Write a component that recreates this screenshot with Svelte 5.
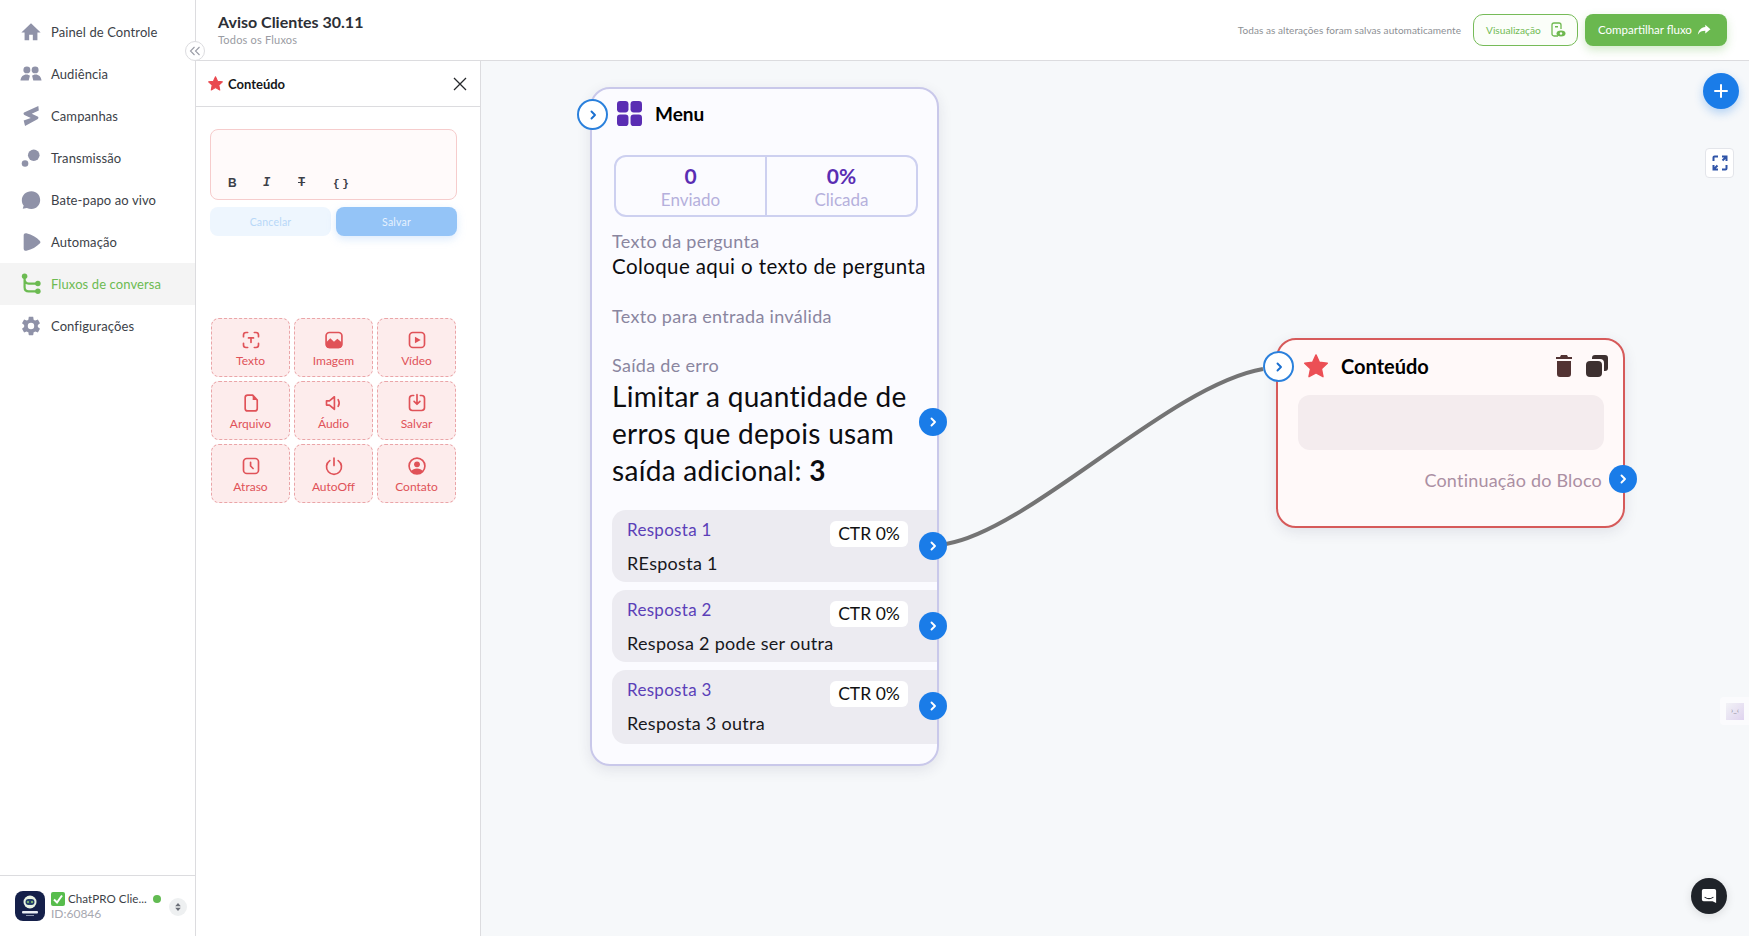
<script>
  const nav = [
    { label: 'Painel de Controle', icon: '<path d="M12 2.500 1.500 12.500H5V21h5v-6h4v6h5v-8.500h3.500z"/>' },
    { label: 'Audiência', icon: '<circle cx="7.500" cy="7.500" r="3.800"/><circle cx="16.500" cy="7.500" r="3.800"/><path d="M.5 19c.4-4 3-6.500 6.500-6.500 1.600 0 3 .6 3.800 1.500L9.500 19zM23.500 19c-.4-4-3-6.500-6.500-6.500-1.600 0-3 .6-3.800 1.500l1.300 5z"/>' },
    { label: 'Campanhas', icon: '<path d="M20 1 5 8c-1.500.7-1.500 2.200-.2 3l7 3.200L4 17l1.500 6L19 15.500c1.500-.8 1.400-2.200.2-2.900l-6.400-3L20.500 6z"/>' },
    { label: 'Transmissão', icon: '<circle cx="15" cy="9" r="6.300"/><circle cx="5.500" cy="18" r="3.600"/>' },
    { label: 'Bate-papo ao vivo', icon: '<path d="M12.500 2.500C6.500 2.500 2 6.800 2 12.200c0 2.300.7 4.300 2 5.900L3 21.500l4.500-.8c1.500.7 3.200 1 5 1C18 21.700 22 17.500 22 12c0-5.400-4-9.500-9.500-9.500z"/>' },
    { label: 'Automação', icon: '<path d="M4 5c0-2 1.300-2.800 3-2.500C13 3.700 18 7 21.500 10.500c1 1 1 2.200 0 3.100C18 17.200 13 20.300 7 21.500c-1.700.3-3-.5-3-2.500z"/>' },
    { label: 'Fluxos de conversa', active: true, icon: '<circle cx="5" cy="3.500" r="3"/><circle cx="19.500" cy="11.500" r="3"/><circle cx="19.500" cy="20" r="3"/><path d="M5 4v11.500c0 3 1.500 4.500 4.500 4.500h9M5 6.500c0 3.500 1.500 5 4.500 5h9" fill="none" stroke="currentColor" stroke-width="2.400"/>' },
    { label: 'Configurações', icon: '<path d="M12,15.500A3.500,3.500 0 0,1 8.500,12A3.500,3.500 0 0,1 12,8.500A3.500,3.500 0 0,1 15.500,12A3.500,3.500 0 0,1 12,15.500M19.430,12.970C19.470,12.650 19.500,12.330 19.500,12C19.500,11.670 19.470,11.340 19.430,11L21.540,9.370C21.730,9.220 21.780,8.950 21.660,8.730L19.660,5.270C19.540,5.050 19.270,4.960 19.050,5.050L16.560,6.050C16.040,5.660 15.500,5.320 14.870,5.070L14.500,2.420C14.460,2.180 14.250,2 14,2H10C9.750,2 9.540,2.180 9.500,2.420L9.130,5.070C8.500,5.320 7.960,5.660 7.440,6.050L4.950,5.050C4.730,4.960 4.460,5.050 4.340,5.270L2.340,8.730C2.210,8.950 2.270,9.220 2.460,9.370L4.570,11C4.530,11.340 4.500,11.670 4.500,12C4.500,12.330 4.530,12.650 4.570,12.970L2.460,14.630C2.270,14.780 2.210,15.050 2.340,15.270L4.340,18.730C4.460,18.950 4.730,19.030 4.950,18.950L7.440,17.940C7.960,18.340 8.500,18.680 9.130,18.930L9.500,21.580C9.540,21.820 9.750,22 10,22H14C14.250,22 14.460,21.820 14.500,21.580L14.870,18.930C15.500,18.670 16.040,18.340 16.560,17.940L19.050,18.950C19.270,19.030 19.540,18.950 19.660,18.730L21.660,15.270C21.780,15.050 21.730,14.780 21.540,14.630L19.430,12.970Z"/>' }
  ]

  const line = 'fill="none" stroke="currentColor" stroke-width="2" stroke-linecap="round" stroke-linejoin="round"'
  const tiles = [
    { label: 'Texto', icon: `<path ${line} d="M3 8V6a3 3 0 0 1 3-3h2M16 3h2a3 3 0 0 1 3 3v2M21 16v2a3 3 0 0 1-3 3h-2M8 21H6a3 3 0 0 1-3-3v-2"/><path ${line} d="M9 9.500h6M12 9.500V15"/>` },
    { label: 'Imagem', icon: `<rect x="2.500" y="3" width="19" height="18" rx="4" ${line}/><path d="M2.500 15l5-5 4.500 4 4-3.500 5.500 4.500v3a4 4 0 0 1-4 4h-11a4 4 0 0 1-4-4z"/>` },
    { label: 'Vídeo', icon: `<rect x="3" y="3" width="18" height="18" rx="4" ${line}/><path d="M9.500 8l7 4-7 4z"/>` },
    { label: 'Arquivo', icon: `<path ${line} d="M5 5.500a3 3 0 0 1 3-3h6l5.500 6V18.500a3 3 0 0 1-3 3H8a3 3 0 0 1-3-3z"/><path d="M14 2.500l5.500 6H14z"/>` },
    { label: 'Áudio', icon: `<path ${line} d="M3 9.500v5h3.500l6 5V4.500l-6 5zM17 8c1.500 2.500 1.500 5.500 0 8"/>` },
    { label: 'Salvar', icon: `<path ${line} d="M8 3H6.500A3.500 3.500 0 0 0 3 6.500v11A3.500 3.500 0 0 0 6.500 21h11a3.500 3.500 0 0 0 3.500-3.500v-11A3.500 3.500 0 0 0 17.500 3H16M12 2v11M8.500 10l3.500 3.500 3.500-3.500"/>` },
    { label: 'Atraso', icon: `<rect x="3" y="3" width="18" height="18" rx="4" ${line}/><path ${line} d="M11.500 7.500V12l3 3"/>` },
    { label: 'AutoOff', icon: `<path ${line} d="M12 2.500v9M7 5.500a9 9 0 1 0 10 0"/>` },
    { label: 'Contato', icon: `<circle cx="12" cy="12" r="9.500" ${line}/><circle cx="12" cy="10" r="3.500"/><path d="M5 18.500c1.500-2.500 4-3.500 7-3.500s5.500 1 7 3.500c-2 2-4.500 3-7 3s-5-1-7-3z"/>` }
  ]

  const replies = [
    { title: 'Resposta 1', text: 'REsposta 1' },
    { title: 'Resposta 2', text: 'Resposa 2 pode ser outra' },
    { title: 'Resposta 3', text: 'Resposta 3 outra' }
  ]

  const star = 'M12 2.500l2.900 6.300 6.800.9-5 4.700 1.300 6.800-6-3.400-6 3.400 1.300-6.800-5-4.700 6.800-.9z'
</script>

{#snippet chevron()}
  <svg viewBox="0 0 12 12" width="12" height="12"><path d="M4.500 2.500 8 6l-3.500 3.500" fill="none" stroke="currentColor" stroke-width="1.900" stroke-linecap="round" stroke-linejoin="round"/></svg>
{/snippet}

<div class="app">
  <aside class="sidebar">
    <nav>
      {#each nav as item}
        <div class="nav-item" class:active={item.active}>
          <svg viewBox="0 0 24 24" width="22" height="22" fill="currentColor">{@html item.icon}</svg>
          <span>{item.label}</span>
        </div>
      {/each}
    </nav>
    <div class="account">
      <div class="avatar">
        <svg viewBox="0 0 30 30" width="30" height="30">
          <circle cx="15" cy="11" r="6.500" fill="#e9f3e4"/>
          <rect x="10.500" y="8" width="9" height="6" rx="3" fill="#25406a"/>
          <circle cx="13" cy="11" r="1" fill="#8fd36f"/>
          <circle cx="17" cy="11" r="1" fill="#8fd36f"/>
          <rect x="7" y="20" width="16" height="2.500" rx="1" fill="#e8edf4"/>
          <rect x="11" y="24" width="8" height="1" fill="#8a94ac"/>
        </svg>
      </div>
      <div class="account-text">
        <div class="account-name">
          <svg viewBox="0 0 14 14" width="14" height="14"><rect width="14" height="14" rx="2" fill="#58bd4d"/><path d="M3 7.500 6 10.500 11 3.500" fill="none" stroke="#fff" stroke-width="2"/></svg>
          <span>ChatPRO Clie...</span>
          <i class="online"></i>
        </div>
        <div class="account-id">ID:60846</div>
      </div>
      <div class="updown">
        <svg viewBox="0 0 10 12" width="8" height="10" fill="#6b6f78"><path d="M5 1 8.500 5h-7zM5 11 1.500 7h7z"/></svg>
      </div>
    </div>
    <button class="collapse" aria-label="Recolher">
      <svg viewBox="0 0 12 12" width="12" height="12"><path d="M5.500 2 1.500 6l4 4M10.500 2l-4 4 4 4" fill="none" stroke="#9a9ca6" stroke-width="1.100"/></svg>
    </button>
  </aside>

  <div class="main">
    <header>
      <div class="titles">
        <h1>Aviso Clientes 30.11</h1>
        <p>Todos os Fluxos</p>
      </div>
      <div class="saved">Todas as alterações foram salvas automaticamente</div>
      <button class="preview">
        <span>Visualização</span>
        <svg viewBox="0 0 16 16" width="16" height="16"><path d="M8 14H4a2 2 0 0 1-2-2V3a2 2 0 0 1 2-2h5a2 2 0 0 1 2 2v4" fill="none" stroke="#6fb950" stroke-width="1.300"/><rect x="5" y="4" width="3" height="1.500" fill="#6fb950"/><ellipse cx="11" cy="11.500" rx="4.500" ry="3" fill="#6fb950"/><circle cx="11" cy="11.500" r="1.200" fill="#fff"/></svg>
      </button>
      <button class="share">
        <span>Compartilhar fluxo</span>
        <svg viewBox="0 0 16 14" width="14" height="12" fill="#fff"><path d="M9.500 1 15.500 6 9.500 11V8C5.500 8 3 9 .8 12.500 1.500 7.500 4.500 4 9.500 3.500z"/></svg>
      </button>
    </header>

    <div class="body">
      <section class="panel">
        <div class="panel-head">
          <svg viewBox="0 0 24 24" width="17" height="17" fill="#e9484f" stroke="#e9484f" stroke-width="1.500" stroke-linejoin="round"><path d={star}/></svg>
          <strong>Conteúdo</strong>
          <svg class="close" viewBox="0 0 14 14" width="14" height="14"><path d="M1 1l12 12M13 1 1 13" stroke="#26282c" stroke-width="1.300"/></svg>
        </div>
        <div class="panel-body">
          <div class="editor">
            <b>B</b>
            <i>I</i>
            <s>T</s>
            <code>{'{ }'}</code>
          </div>
          <div class="actions">
            <button class="cancel">Cancelar</button>
            <button class="save">Salvar</button>
          </div>
          <div class="tiles">
            {#each tiles as tile}
              <div class="tile">
                <svg viewBox="0 0 24 24" width="20" height="20" fill="currentColor">{@html tile.icon}</svg>
                <span>{tile.label}</span>
              </div>
            {/each}
          </div>
        </div>
      </section>

      <section class="canvas">
        <svg class="edges" width="1268" height="875">
          <path d="M465 483C549 469 689 324 782 308" fill="none" stroke="#747474" stroke-width="4"/>
        </svg>

        <div class="node menu">
          <span class="port in">{@render chevron()}</span>
          <div class="node-head">
            <svg viewBox="0 0 24 24" width="25" height="25" fill="#5a2db3"><rect x="0" y="0" width="11" height="11" rx="3"/><rect x="13" y="0" width="11" height="11" rx="3"/><rect x="0" y="13" width="11" height="11" rx="3"/><rect x="13" y="13" width="11" height="11" rx="3"/></svg>
            <strong>Menu</strong>
          </div>
          <div class="stats">
            <div><b>0</b><span>Enviado</span></div>
            <div><b>0%</b><span>Clicada</span></div>
          </div>
          <div class="field">
            <span class="field-label">Texto da pergunta</span>
            <span class="field-value">Coloque aqui o texto de pergunta</span>
          </div>
          <div class="field">
            <span class="field-label">Texto para entrada inválida</span>
          </div>
          <div class="field error">
            <span class="field-label">Saída de erro</span>
            <span class="error-text">Limitar a quantidade de erros que depois usam saída adicional: <b>3</b></span>
            <span class="port out">{@render chevron()}</span>
          </div>
          <div class="replies">
            {#each replies as reply}
              <div class="reply">
                <div class="reply-top">
                  <span class="reply-title">{reply.title}</span>
                  <span class="ctr">CTR 0%</span>
                </div>
                <div class="reply-text">{reply.text}</div>
                <span class="port out">{@render chevron()}</span>
              </div>
            {/each}
          </div>
        </div>

        <div class="node content">
          <span class="port in">{@render chevron()}</span>
          <div class="node-head">
            <svg viewBox="0 0 24 24" width="28" height="28" fill="#ec4f55" stroke="#ec4f55" stroke-width="1.200" stroke-linejoin="round"><path d={star}/></svg>
            <strong>Conteúdo</strong>
            <div class="tools">
              <svg viewBox="0 0 16 22" width="16" height="22" fill="#523333"><path d="M5 0h6l1 2h4v2H0V2h4zM1 6h14v13a3 3 0 0 1-3 3H4a3 3 0 0 1-3-3z"/></svg>
              <svg viewBox="0 0 22 22" width="22" height="22" fill="#3d3030"><path d="M9 0h10a3 3 0 0 1 3 3v10a3 3 0 0 1-3 3h-1V8a4 4 0 0 0-4-4H6V3a3 3 0 0 1 3-3z"/><rect x="0" y="6" width="16" height="16" rx="4"/></svg>
            </div>
          </div>
          <div class="content-box"></div>
          <div class="continue">
            <span>Continuação do Bloco</span>
            <span class="port out">{@render chevron()}</span>
          </div>
        </div>

        <button class="add" aria-label="Adicionar">
          <svg viewBox="0 0 14 14" width="14" height="14"><path d="M7 1v12M1 7h12" stroke="#fff" stroke-width="2" stroke-linecap="round"/></svg>
        </button>
        <button class="fit" aria-label="Ajustar">
          <svg viewBox="0 0 16 16" width="16" height="16" fill="none" stroke="#2f54a8" stroke-width="2"><path d="M6 1.500H2.500a1 1 0 0 0-1 1V6M10 1.500h4.500V6M14.500 1.500 10.500 5.500M1.500 10v4.500H6M1.500 14.500l4-4M14.500 10v3.500a1 1 0 0 1-1 1H10"/></svg>
        </button>
        <div class="peek">
          <div class="peek-face">›_‹</div>
        </div>
        <button class="help" aria-label="Ajuda">
          <svg viewBox="0 0 18 18" width="16" height="16"><path d="M3 1h12a2 2 0 0 1 2 2v14l-4-2H3a2 2 0 0 1-2-2V3a2 2 0 0 1 2-2z" fill="#fff"/><path d="M4.500 10.500c2.500 1.600 6.500 1.600 9 0" fill="none" stroke="#1f2329" stroke-width="1.200" stroke-linecap="round"/></svg>
        </button>
      </section>
    </div>
  </div>
</div>

<style>
  :global(body) {
    margin: 0;
    font-family: "Lato", "Noto Sans", sans-serif;
    color: #2c2f36;
  }
  button {
    font-family: inherit;
    border: none;
    padding: 0;
  }
  .app {
    display: flex;
    height: 936px;
    overflow: hidden;
  }
  .sidebar {
    position: relative;
    width: 195px;
    flex-shrink: 0;
    display: flex;
    flex-direction: column;
    border-right: 1px solid #dcdcdf;
    background: #fff;
    z-index: 3;
  }
  nav {
    padding-top: 11px;
  }
  .nav-item {
    display: flex;
    align-items: center;
    gap: 9px;
    height: 42px;
    padding-left: 20px;
    font-size: 13px;
    letter-spacing: 0.1px;
    color: #3c3f48;
  }
  .nav-item svg {
    color: #8f92a8;
    flex-shrink: 0;
  }
  .nav-item span {
    padding-bottom: 1px;
  }
  .nav-item.active {
    background: #f4f4f4;
    color: #6cbb52;
  }
  .nav-item.active svg {
    color: #6cbb52;
  }
  .account {
    margin-top: auto;
    height: 60px;
    border-top: 1px solid #dcdcdf;
    display: flex;
    align-items: center;
    padding-left: 15px;
    gap: 6px;
  }
  .avatar {
    width: 30px;
    height: 30px;
    border-radius: 8px;
    background: #15204a;
    overflow: hidden;
    flex-shrink: 0;
  }
  .account-text {
    width: 112px;
  }
  .account-name {
    display: flex;
    align-items: center;
    gap: 3px;
    font-size: 11.6px;
    letter-spacing: 0.05px;
    color: #3c3f48;
    white-space: nowrap;
  }
  .account-name svg {
    flex-shrink: 0;
  }
  .online {
    width: 8px;
    height: 8px;
    border-radius: 50%;
    background: #62bb52;
    margin-left: 3px;
    flex-shrink: 0;
  }
  .account-id {
    font-size: 12px;
    color: #a6a8b0;
  }
  .updown {
    width: 18px;
    height: 18px;
    border-radius: 50%;
    background: #eef0f1;
    display: flex;
    align-items: center;
    justify-content: center;
    margin-top: 2px;
  }
  .collapse {
    position: absolute;
    top: 41px;
    right: -10px;
    width: 20px;
    height: 20px;
    border-radius: 50%;
    border: 1px solid #dcdcdf;
    background: #fff;
    display: flex;
    align-items: center;
    justify-content: center;
  }

  .main {
    flex: 1;
    min-width: 0;
    display: flex;
    flex-direction: column;
  }
  header {
    height: 60px;
    flex-shrink: 0;
    border-bottom: 1px solid #dcdcdf;
    display: flex;
    align-items: center;
    padding: 0 22px 0 22px;
    background: #fff;
  }
  .titles {
    margin-right: auto;
    margin-top: -2px;
  }
  h1 {
    margin: 0;
    font-size: 16px;
    font-weight: 700;
    letter-spacing: 0;
  }
  .titles p {
    margin: 2px 0 0;
    font-size: 11px;
    letter-spacing: 0.2px;
    color: #9a9ca3;
  }
  .saved {
    font-size: 10px;
    letter-spacing: 0.06px;
    color: #8d8f94;
    margin-right: 12px;
    padding-bottom: 1px;
  }
  .preview, .share {
    height: 32px;
    display: flex;
    align-items: center;
    justify-content: space-between;
    box-sizing: border-box;
    white-space: nowrap;
  }
  .preview {
    width: 105px;
    padding: 0 11px 0 12px;
    border: 1.5px solid #76bb58;
    border-radius: 10px;
    background: #fbfef9;
    color: #72bb55;
    font-size: 10.2px;
    margin-right: 7px;
  }
  .share {
    width: 142px;
    padding: 0 16px 0 13px;
    border-radius: 8px;
    background: #6ab84f;
    color: #fff;
    font-size: 11.5px;
    box-shadow: 0 4px 10px rgba(106, 184, 79, 0.3);
  }
  .share span {
    padding-bottom: 2px;
  }

  .body {
    flex: 1;
    display: flex;
    min-height: 0;
  }
  .panel {
    width: 285px;
    flex-shrink: 0;
    border-right: 1px solid #dcdcdf;
    box-sizing: border-box;
    background: #fff;
  }
  .panel-head {
    height: 45px;
    border-bottom: 1px solid #dcdcdf;
    display: flex;
    align-items: center;
    gap: 4px;
    padding: 0 13px 0 11px;
    font-size: 13px;
    color: #15171a;
  }
  .close {
    margin-left: auto;
  }
  .panel-body {
    padding: 22px 23px 0 14px;
  }
  .editor {
    height: 71px;
    box-sizing: border-box;
    border: 1px solid #f6cccc;
    border-radius: 8px;
    background: #fffafa;
    display: flex;
    align-items: flex-end;
    padding: 0 0 9px 17px;
    font-size: 12px;
    color: #3c3f48;
  }
  .editor b, .editor i, .editor s, .editor code {
    width: 35px;
    font-weight: 700;
    font-family: "Liberation Mono", monospace;
  }
  .editor b {
    font-family: "Liberation Sans", sans-serif;
  }
  .editor code {
    font-size: 11px;
    letter-spacing: -2px;
  }
  .actions {
    display: flex;
    gap: 5px;
    margin-top: 7px;
  }
  .actions button {
    flex: 1;
    height: 29px;
    border-radius: 8px;
    font-size: 10.5px;
    letter-spacing: 0.2px;
  }
  .cancel {
    background: #eef6fe;
    color: #b8d8f8;
  }
  .save {
    background: #94c4f7;
    color: #e6f2fe;
    box-shadow: 0 3px 8px rgba(148, 196, 247, 0.35);
  }
  .tiles {
    display: grid;
    grid-template-columns: repeat(3, 79px);
    grid-auto-rows: 59px;
    gap: 4px;
    margin: 82px 0 0 1px;
  }
  .tile {
    box-sizing: border-box;
    border: 1px dashed #eaa5a8;
    border-radius: 8px;
    background: #fdecec;
    color: #e05258;
    display: flex;
    flex-direction: column;
    align-items: center;
    padding-top: 11px;
    gap: 3px;
    font-size: 12px;
  }

  .canvas {
    position: relative;
    flex: 1;
    background: #f6f8fa;
    overflow: hidden;
  }
  .edges {
    position: absolute;
    left: 0;
    top: 0;
    z-index: 2;
    pointer-events: none;
  }
  .node {
    position: absolute;
    box-sizing: border-box;
    border-radius: 20px;
    border: 2px solid;
    box-shadow: 0 4px 14px rgba(40, 40, 80, 0.1);
  }
  .menu {
    left: 109px;
    top: 26px;
    width: 349px;
    height: 679px;
    border-color: #c9c8ea;
    background: #fbfbff;
    padding: 10px 0 0 20px;
  }
  .node-head {
    display: flex;
    align-items: center;
    font-size: 19px;
    color: #000;
  }
  .menu .node-head {
    gap: 13px;
    padding-left: 5px;
    height: 28px;
  }
  .stats {
    display: flex;
    width: 304px;
    height: 62px;
    box-sizing: border-box;
    margin: 28px 0 0 2px;
    border: 2px solid #cdd0f0;
    border-radius: 12px;
  }
  .stats div {
    flex: 1;
    display: flex;
    flex-direction: column;
    align-items: center;
    justify-content: center;
  }
  .stats div + div {
    border-left: 2px solid #cdd0f0;
  }
  .stats b {
    font-size: 21px;
    font-weight: 700;
    line-height: 26px;
    color: #5a2db3;
  }
  .stats span {
    font-size: 17px;
    line-height: 21px;
    color: #b5b0dc;
  }
  .field {
    position: relative;
    display: flex;
    flex-direction: column;
    margin-top: 12px;
  }
  .field + .field {
    margin-top: 25px;
  }
  .field-label {
    font-size: 18px;
    line-height: 24px;
    letter-spacing: 0.3px;
    color: #8a86a0;
  }
  .field-value {
    font-size: 20.5px;
    line-height: 26px;
    letter-spacing: 0.4px;
    color: #0c0c10;
    white-space: nowrap;
  }
  .error-text {
    font-size: 28px;
    line-height: 37px;
    letter-spacing: 0.3px;
    color: #0c0c10;
    width: 310px;
    margin-top: 1px;
  }
  .error .port {
    right: -10px;
    top: 55px;
  }
  .replies {
    display: flex;
    flex-direction: column;
    gap: 8px;
    margin: 21px 0 0;
  }
  .reply {
    position: relative;
    height: 72px;
    box-sizing: border-box;
    padding: 8px 0 0 15px;
    background: #ecebf1;
    border-radius: 14px 0 0 14px;
  }
  .reply:last-child {
    height: 74px;
  }
  .reply-top {
    display: flex;
    justify-content: space-between;
    align-items: flex-start;
    padding-right: 29px;
    height: 33px;
  }
  .reply-title {
    font-size: 17px;
    line-height: 23px;
    letter-spacing: 0.3px;
    color: #5b3fb8;
  }
  .ctr {
    width: 78px;
    height: 26px;
    margin-top: 3px;
    border-radius: 6px;
    background: #fff;
    color: #111;
    font-size: 17.5px;
    line-height: 26px;
    text-align: center;
  }
  .reply-text {
    font-size: 18px;
    line-height: 24px;
    letter-spacing: 0.3px;
    color: #18181c;
  }
  .reply .port {
    right: -10px;
    top: 22px;
  }
  .port {
    position: absolute;
    display: flex;
    align-items: center;
    justify-content: center;
    border-radius: 50%;
    box-sizing: border-box;
    z-index: 4;
  }
  .port.out {
    width: 28px;
    height: 28px;
    background: #1a7ce8;
    color: #fff;
  }
  .port.in {
    width: 31px;
    height: 31px;
    border: 2px solid #2a80dc;
    background: #fff;
    color: #1a6fd0;
    left: -15px;
    top: 10px;
  }
  .content {
    left: 795px;
    top: 277px;
    width: 349px;
    height: 190px;
    border-color: #d65a5a;
    background: #fff9f9;
    padding: 12px 0 0 20px;
  }
  .content .port.in {
    top: 11px;
  }
  .content .node-head {
    gap: 11px;
    padding-left: 4px;
    height: 28px;
    font-size: 20px;
    padding-right: 15px;
  }
  .tools {
    margin-left: auto;
    display: flex;
    gap: 14px;
  }
  .content-box {
    width: 306px;
    height: 55px;
    margin-top: 15px;
    border-radius: 12px;
    background: #f4ecee;
  }
  .continue {
    display: flex;
    justify-content: flex-end;
    position: relative;
    margin-top: 17px;
    padding-right: 21px;
    font-size: 18px;
    line-height: 26px;
    letter-spacing: 0.2px;
    color: #ab8fa3;
  }
  .continue .port {
    right: -14px;
    top: -2px;
  }
  .add {
    position: absolute;
    right: 10px;
    top: 12px;
    width: 36px;
    height: 36px;
    border-radius: 50%;
    background: #1a7ce8;
    display: flex;
    align-items: center;
    justify-content: center;
    box-shadow: 0 4px 10px rgba(26, 124, 232, 0.3);
  }
  .fit {
    position: absolute;
    right: 15px;
    top: 87px;
    width: 29px;
    height: 30px;
    border-radius: 4px;
    background: #fff;
    border: 1px solid #e3e5ea;
    display: flex;
    align-items: center;
    justify-content: center;
  }
  .peek {
    position: absolute;
    right: 0;
    top: 636px;
    width: 29px;
    height: 28px;
    border-radius: 4px 0 0 4px;
    background: #fbfbfd;
    display: flex;
    align-items: center;
    justify-content: center;
    padding-left: 1px;
    box-sizing: border-box;
  }
  .peek-face {
    width: 18px;
    height: 17px;
    background: linear-gradient(135deg, #f2f2f6, #dfd3ef);
    font-size: 8px;
    line-height: 15px;
    text-align: center;
    color: #8d8f9c;
  }
  .help {
    position: absolute;
    right: 22px;
    bottom: 22px;
    width: 36px;
    height: 36px;
    border-radius: 50%;
    background: #1f2329;
    display: flex;
    align-items: center;
    justify-content: center;
    box-shadow: 0 2px 10px rgba(0, 0, 0, 0.12);
  }
</style>
